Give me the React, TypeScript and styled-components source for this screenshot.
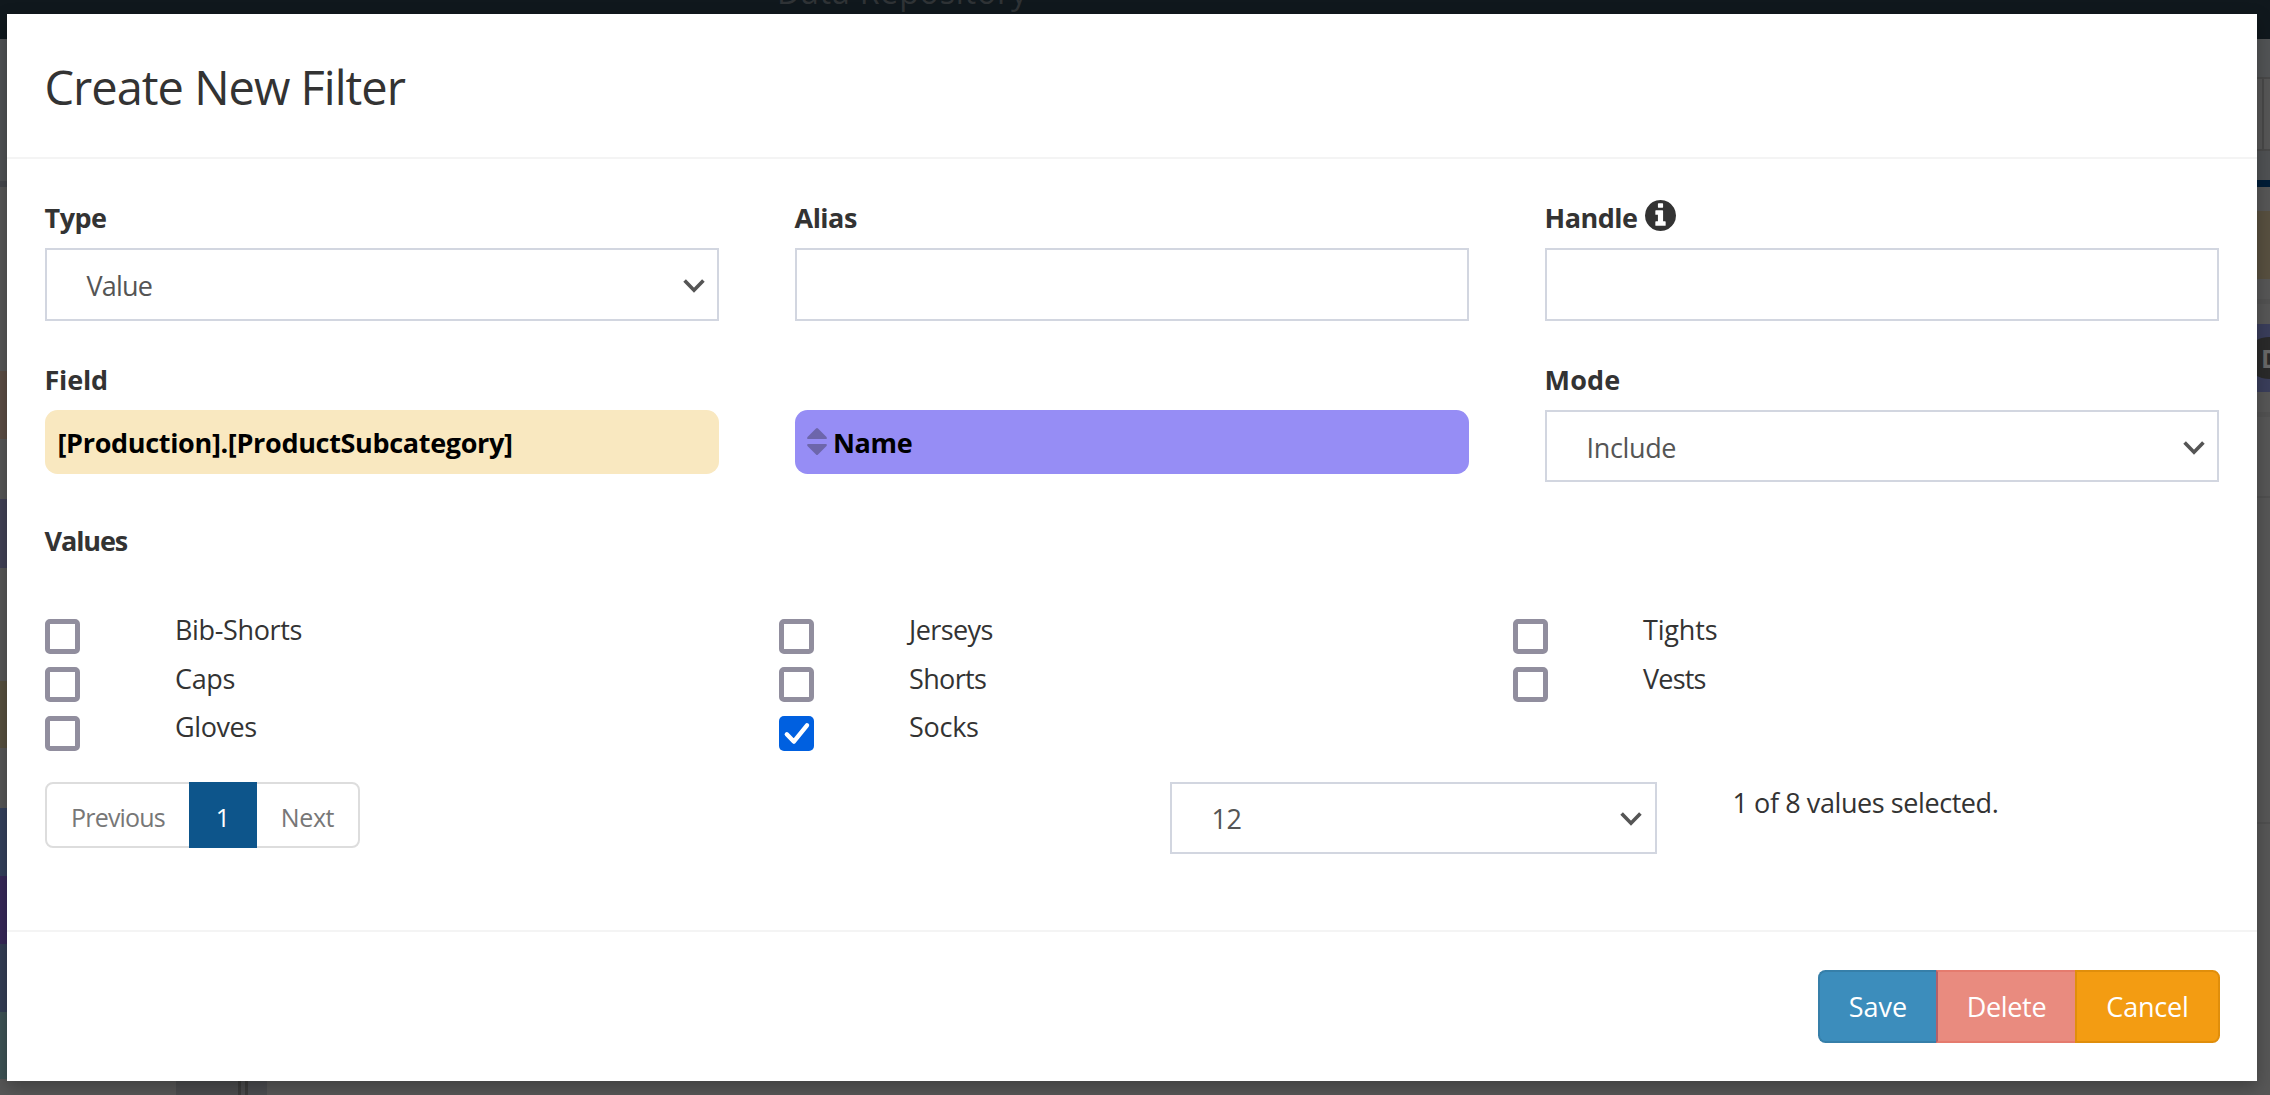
import React, { useState } from 'react';
import styled, { createGlobalStyle } from 'styled-components';

const GlobalStyle = createGlobalStyle`
  * { box-sizing: border-box; }
  body {
    margin: 0;
    overflow: hidden;
    background: #575757;
    font-family: "Open Sans", "Noto Sans", sans-serif;
    color: #333;
  }
`;

const Screen = styled.div`
  display: flex;
  flex-direction: column;
  width: 2270px;
  height: 1095px;
  overflow: hidden;
  background: #575757;
`;

const TopBar = styled.div`
  flex: none;
  height: 14px;
  padding-left: 777px;
  overflow: hidden;
  background: #10181d;
`;

const TopBarTitle = styled.div`
  margin-top: -28px;
  font-size: 32px;
  line-height: 40px;
  letter-spacing: 0.85px;
  color: #2f3336;
`;

const Middle = styled.div`
  display: flex;
  height: 1067px;
`;

const Strip = styled.div<{ $width: number }>`
  display: flex;
  flex-direction: column;
  flex: none;
  width: ${p => p.$width}px;
  overflow: hidden;
`;

const Band = styled.div<{ $height: number; $color: string }>`
  flex: none;
  height: ${p => p.$height}px;
  background: ${p => p.$color};
`;

const TabBand = styled.div`
  flex: none;
  height: 70px;
  width: 7px;
  border-right: 2px solid #494949;
`;

const PillBand = styled.div`
  flex: none;
  height: 68px;
  padding-top: 13px;
  background: #3a3e5b;
`;

const Pill = styled.div`
  width: 60px;
  height: 42px;
  margin-left: -8px;
  padding-left: 12px;
  border-radius: 21px / 14px;
  background: #2a2a2a;
  color: #696969;
  font-size: 25px;
  font-weight: 700;
  line-height: 42px;
`;

const BottomStrip = styled.div`
  display: flex;
  flex: none;
  height: 14px;
  padding-left: 176px;
`;

const BottomCell = styled.div<{ $width: number; $color: string }>`
  width: ${p => p.$width}px;
  background: ${p => p.$color};
`;

const Modal = styled.section`
  position: relative;
  z-index: 1;
  display: flex;
  flex-direction: column;
  width: 2250px;
  background: #fff;
  box-shadow: 0 6px 16px rgba(0, 0, 0, 0.28);
`;

const Header = styled.header`
  height: 145px;
  padding: 43px 37.5px 0;
  border-bottom: 2px solid #f4f4f4;
`;

const Title = styled.h1`
  margin: 0;
  font-size: 47px;
  font-weight: 400;
  line-height: 60px;
  letter-spacing: -1px;
`;

const Body = styled.div`
  flex: 1;
  padding: 38px 37.5px 0;
`;

const FieldRow = styled.div`
  display: grid;
  grid-template-columns: repeat(3, 674.5px);
  column-gap: 75.5px;
  margin-bottom: 38px;
`;

const Field = styled.div`
  display: flex;
  flex-direction: column;
`;

const Label = styled.label<{ $track?: number }>`
  display: flex;
  height: 51px;
  font-size: 27px;
  font-weight: 700;
  line-height: 41px;
  letter-spacing: ${p => p.$track ?? -0.5}px;
`;

const InfoIcon = styled.svg`
  width: 31px;
  height: 31px;
  margin: 3px 0 0 7px;
  fill: #333;
`;

const Input = styled.input`
  height: 73px;
  width: 100%;
  padding: 0 40px;
  border: 2px solid #d2d6e0;
  background: #fff;
  font: inherit;
  font-size: 27px;
  outline: none;
`;

const SelectBox = styled.div<{ $height?: number; $track?: number }>`
  display: flex;
  align-items: center;
  justify-content: space-between;
  width: 100%;
  height: ${p => p.$height ?? 72}px;
  padding: 3px 12.5px 0 40px;
  border: 2px solid #d2d6e0;
  background: #fff;
  color: #555;
  font-size: 27px;
  line-height: 40px;
  letter-spacing: ${p => p.$track ?? -0.35}px;
`;

const Tag = styled.div<{ $color: string }>`
  display: flex;
  align-items: center;
  height: 64px;
  padding: 2px 11.5px 0 13px;
  border-radius: 12.5px;
  background: ${p => p.$color};
  color: #000;
  font-size: 27px;
  font-weight: 700;
  line-height: 40px;
  letter-spacing: -0.33px;
`;

const SortIcon = styled.svg`
  width: 20px;
  height: 27px;
  margin: -3px 6px 0 -0.5px;
  fill: #6d66ab;
`;

const ValueGrid = styled.div`
  display: grid;
  grid-template-columns: repeat(3, 734px);
  grid-template-rows: repeat(3, 48.5px);
  grid-auto-flow: column;
  margin-right: -27px;
`;

const ValueItem = styled.label`
  display: flex;
  align-items: flex-start;
`;

const Check = styled.input.attrs({ type: 'checkbox' })`
  appearance: none;
  flex: none;
  width: 35px;
  height: 35px;
  margin: 9.5px 95px 0 0.5px;
  border: 5px solid #918e9e;
  border-radius: 5px;
  background: #fff;
`;

const Checked = styled.svg`
  flex: none;
  width: 35px;
  height: 35px;
  margin: 9.5px 95px 0 0.5px;
  border-radius: 5px;
  background: #0060e0;
`;

const ValueText = styled.span<{ $track: number }>`
  font-size: 27px;
  line-height: 42px;
  letter-spacing: ${p => p.$track}px;
`;

const PagerRow = styled.div`
  display: flex;
  align-items: flex-start;
  margin-top: 27px;
`;

const Pager = styled.nav`
  display: flex;
  height: 66px;
  width: 315px;
  border: 2px solid #ddd;
  border-radius: 8px;
`;

const PageLink = styled.span<{ $width: number; $active?: boolean; $track?: number }>`
  display: flex;
  align-items: center;
  justify-content: center;
  width: ${p => p.$width}px;
  margin: ${p => (p.$active ? '-2px 0' : '0')};
  padding: 4px 0 0 1px;
  background: ${p => (p.$active ? '#0d558b' : 'transparent')};
  color: ${p => (p.$active ? '#fff' : '#777')};
  font-size: 25px;
  letter-spacing: ${p => p.$track ?? 0}px;
`;

const PageSize = styled.div`
  width: 487px;
  margin-left: 810px;
`;

const Summary = styled.div`
  margin-left: 76px;
  font-size: 27px;
  line-height: 42px;
  letter-spacing: -0.42px;
  white-space: nowrap;
`;

const Footer = styled.footer`
  display: flex;
  justify-content: flex-end;
  height: 151px;
  padding: 38px 37px;
  border-top: 2px solid #f4f4f4;
`;

const Button = styled.button<{ $width: number; $bg: string; $edge: string; $left?: string; $track?: number }>`
  width: ${p => p.$width}px;
  height: 73px;
  padding: 0;
  border: 2px solid ${p => p.$edge};
  border-left-color: ${p => p.$left ?? p.$edge};
  background: ${p => p.$bg};
  color: #fff;
  font: inherit;
  font-size: 27px;
  line-height: 40px;
  letter-spacing: ${p => p.$track ?? 0}px;

  &:not(:last-child) { border-right-width: 0; }
  &:first-child { border-radius: 7.5px 0 0 7.5px; }
  &:last-child { border-radius: 0 7.5px 7.5px 0; }
`;

const leftBands: [number, string][] = [
  [25, '#10181d'], [142, '#505254'], [6, '#46484d'], [184, '#575757'],
  [68, '#5b4d44'], [60, '#575757'], [69, '#414156'], [113, '#575757'],
  [67, '#57503f'], [60, '#575757'], [68, '#34405c'], [68, '#372859'],
  [68, '#343e56'], [67, '#3e5355'],
];

const rightTop: [number, string][] = [[25, '#10181d'], [38, '#525456'], [2, '#494949']];
const rightMid: [number, string][] = [
  [2, '#494949'], [29, '#505254'], [7, '#001d37'], [24, '#575757'],
  [68, '#585040'], [20, '#575757'], [5, '#525252'], [20, '#575757'],
];
const rightLow: [number, string][] = [
  [20, '#575757'], [5, '#525252'], [79, '#575757'], [2, '#505050'],
  [324, '#575757'], [2, '#505050'],
];

const values: { name: string; track: number }[] = [
  { name: 'Bib-Shorts', track: -0.35 },
  { name: 'Caps', track: -0.35 },
  { name: 'Gloves', track: -0.4 },
  { name: 'Jerseys', track: -0.6 },
  { name: 'Shorts', track: -0.65 },
  { name: 'Socks', track: -0.27 },
  { name: 'Tights', track: -0.18 },
  { name: 'Vests', track: -0.8 },
];

const Bands = ({ list }: { list: [number, string][] }) => (
  <>{list.map(([h, c], i) => <Band key={i} $height={h} $color={c} />)}</>
);

const Chevron = () => (
  <svg width="22" height="14" viewBox="0 0 22 14">
    <path d="M1.6 1.4 L11 11.2 L20.4 1.4" fill="none" stroke="#555" strokeWidth="3.6" />
  </svg>
);

const Select = ({ text, height, track }: { text: string; height?: number; track?: number }) => (
  <SelectBox $height={height} $track={track}>
    <span>{text}</span>
    <Chevron />
  </SelectBox>
);

export default function App() {
  const [selected, setSelected] = useState<string[]>(['Socks']);
  const toggle = (name: string) =>
    setSelected(s => (s.includes(name) ? s.filter(n => n !== name) : [...s, name]));

  return (
    <Screen>
      <GlobalStyle />
      <TopBar><TopBarTitle>Data Repository</TopBarTitle></TopBar>
      <Middle>
        <Strip $width={7}><Bands list={leftBands} /></Strip>
        <Modal>
          <Header><Title>Create New Filter</Title></Header>
          <Body>
            <FieldRow>
              <Field>
                <Label>Type</Label>
                <Select text="Value" height={73} track={-0.8} />
              </Field>
              <Field>
                <Label>Alias</Label>
                <Input />
              </Field>
              <Field>
                <Label>
                  Handle
                  <InfoIcon viewBox="0 0 1536 1536">
                    <path d="M1024 1248v-160q0-14-9-23t-23-9h-96v-512q0-14-9-23t-23-9h-320q-14 0-23 9t-9 23v160q0 14 9 23t23 9h96v320h-96q-14 0-23 9t-9 23v160q0 14 9 23t23 9h448q14 0 23-9t9-23zM896 352v-160q0-14-9-23t-23-9h-192q-14 0-23 9t-9 23v160q0 14 9 23t23 9h192q14 0 23-9t9-23zM1536 768q0 209-103 385.500t-279.500 279.500t-385.500 103t-385.500-103t-279.500-279.500t-103-385.500t103-385.500t279.500-279.500t385.500-103t385.500 103t279.500 279.500t103 385.500z" />
                  </InfoIcon>
                </Label>
                <Input />
              </Field>
            </FieldRow>
            <FieldRow>
              <Field>
                <Label $track={-0.2}>Field</Label>
                <Tag $color="#f9e8c0">[Production].[ProductSubcategory]</Tag>
              </Field>
              <Field>
                <Label />
                <Tag $color="#968df5">
                  <SortIcon viewBox="0 0 20 27">
                    <path d="M9 0.5 Q10 -0.5 11 0.5 L19.5 9 Q20.600 11 18.500 11 L1.500 11 Q-0.600 11 0.500 9 Z" />
                    <path d="M9 26.500 Q10 27.500 11 26.500 L19.500 18 Q20.600 16 18.500 16 L1.500 16 Q-0.600 16 0.500 18 Z" />
                  </SortIcon>
                  Name
                </Tag>
              </Field>
              <Field>
                <Label $track={0.2}>Mode</Label>
                <Select text="Include" />
              </Field>
            </FieldRow>
            <Label $track={-1.1}>Values</Label>
            <Band $height={38} $color="#fff" />
            <ValueGrid>
              {values.map(v => (
                <ValueItem key={v.name}>
                  {selected.includes(v.name) ? (
                    <Checked viewBox="0 0 35 35" onClick={() => toggle(v.name)}>
                      <path d="M7.8 18.300 L14.800 25.600 L28 9.300" fill="none" stroke="#fff" strokeWidth="4.4" strokeLinecap="round" strokeLinejoin="round" />
                    </Checked>
                  ) : (
                    <Check checked={false} onChange={() => toggle(v.name)} />
                  )}
                  <ValueText $track={v.track}>{v.name}</ValueText>
                </ValueItem>
              ))}
            </ValueGrid>
            <PagerRow>
              <Pager>
                <PageLink $width={142} $track={-0.8}>Previous</PageLink>
                <PageLink $width={68} $active>1</PageLink>
                <PageLink $width={101} $track={-0.4}>Next</PageLink>
              </Pager>
              <PageSize><Select text="12" /></PageSize>
              <Summary>{selected.length} of {values.length} values selected.</Summary>
            </PagerRow>
          </Body>
          <Footer>
            <Button $width={118} $bg="#3c8dbc" $edge="#367fa9">Save</Button>
            <Button $width={139} $bg="#e98b7f" $edge="#e57b6e" $left="#b0606a" $track={-0.34}>Delete</Button>
            <Button $width={145} $bg="#f39c12" $edge="#e08e0b" $track={-0.2}>Cancel</Button>
          </Footer>
        </Modal>
        <Strip $width={13}>
          <Bands list={rightTop} />
          <TabBand />
          <Bands list={rightMid} />
          <PillBand><Pill>D</Pill></PillBand>
          <Bands list={rightLow} />
        </Strip>
      </Middle>
      <BottomStrip>
        <BottomCell $width={62} $color="#4b4c4e" />
        <BottomCell $width={3} $color="#3b3b3b" />
        <BottomCell $width={4} $color="#4b4c4e" />
        <BottomCell $width={3} $color="#3b3b3b" />
        <BottomCell $width={19} $color="#4b4d50" />
      </BottomStrip>
    </Screen>
  );
}
